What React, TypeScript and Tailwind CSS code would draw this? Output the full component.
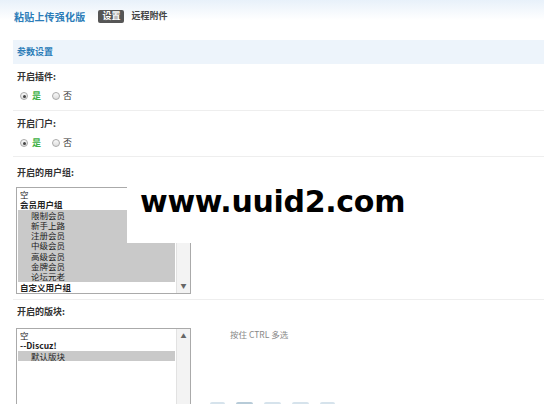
import React from 'react'

const groups: { label: string; bold?: boolean; indent?: boolean; selected?: boolean }[] = [
  { label: '空' },
  { label: '会员用户组', bold: true },
  { label: '限制会员', indent: true, selected: true },
  { label: '新手上路', indent: true, selected: true },
  { label: '注册会员', indent: true, selected: true },
  { label: '中级会员', indent: true, selected: true },
  { label: '高级会员', indent: true, selected: true },
  { label: '金牌会员', indent: true, selected: true },
  { label: '论坛元老', indent: true, selected: true },
  { label: '自定义用户组', bold: true }
]

const forums: typeof groups = [
  { label: '空' },
  { label: '--Discuz!', bold: true },
  { label: '默认版块', indent: true, selected: true }
]

function Radio({ checked }: { checked?: boolean }) {
  return (
    <span className="w-[8px] h-[8px] rounded-full border border-[#aaa] bg-gradient-to-b from-[#fafafa] to-[#ddd] flex items-center justify-center">
      {checked && <span className="w-[3px] h-[3px] rounded-full bg-[#444]" />}
    </span>
  )
}

function YesNo() {
  return (
    <div className="flex items-center h-[12px] pl-[7px] text-[9px]">
      <Radio checked />
      <span className="ml-[4px] text-[#3cb043] font-bold">是</span>
      <span className="ml-[11px]">
        <Radio />
      </span>
      <span className="ml-[3px] text-[#333]">否</span>
    </div>
  )
}

function ListBox({ items, arrow, rows }: { items: typeof groups; arrow: 'up' | 'down'; rows: number }) {
  return (
    <div className="w-[175px] border border-[#aaa] bg-white flex">
      <div className="flex-1 p-[1px]" style={{ height: rows * 10.3 + 2 }}>
        {items.map((it) => (
          <div
            key={it.label}
            className={`h-[10.3px] leading-[10.3px] text-[8.5px] text-[#222] overflow-hidden ${
              it.indent ? 'pl-[13px]' : 'pl-[2px]'
            } ${it.bold ? 'font-bold' : ''} ${it.selected ? 'bg-[#c9c9c9]' : ''}`}
          >
            {it.label}
          </div>
        ))}
      </div>
      <div
        className={`w-[14px] bg-[#f3f3f3] border-l border-[#e2e2e2] flex ${
          arrow === 'down' ? 'items-end' : 'items-start'
        } justify-center text-[6px] text-[#666] leading-none py-[4px]`}
      >
        {arrow === 'down' ? '▼' : '▲'}
      </div>
    </div>
  )
}

export default function App() {
  return (
    <div className="relative w-[544px] h-[404px] overflow-hidden bg-white font-['Noto_Sans_CJK_SC',sans-serif]">
      {/* header */}
      <div className="h-[40px] bg-gradient-to-b from-[#e8f1fa] via-white to-white">
        <div className="h-[32px] flex items-center pl-[14px]">
          <span className="text-[10px] font-bold text-[#2b7cb8] tracking-[0.2px]">粘贴上传强化版</span>
          <span className="ml-[13px] h-[13px] px-[4px] rounded-[2px] bg-[#565656] text-white text-[9px] font-bold flex items-center">
            设置
          </span>
          <span className="ml-[7px] text-[9px] text-[#444] font-bold">远程附件</span>
        </div>
      </div>

      <div className="ml-[13px]">
        {/* section bar */}
        <div className="h-[24px] bg-[#edf4fb] flex items-center pl-[4px] text-[9px] font-bold text-[#2b7cb8]">
          参数设置
        </div>

        <div className="pt-[7px] pb-[8px] border-b border-[#eeeeee]">
          <div className="pl-[4px] h-[12px] leading-[12px] text-[9px] font-bold text-[#333]">开启插件:</div>
          <div className="mt-[7px]">
            <YesNo />
          </div>
        </div>

        <div className="pt-[7px] pb-[7px] border-b border-[#eeeeee]">
          <div className="pl-[4px] h-[12px] leading-[12px] text-[9px] font-bold text-[#333]">开启门户:</div>
          <div className="mt-[7px]">
            <YesNo />
          </div>
        </div>

        <div className="pt-[10px] pb-[5px] border-b border-[#eeeeee]">
          <div className="pl-[4px] h-[12px] leading-[12px] text-[9px] font-bold text-[#333]">开启的用户组:</div>
          <div className="mt-[8px] pl-[3px]">
            <ListBox items={groups} arrow="down" rows={10} />
          </div>
        </div>

        <div className="pt-[6px]">
          <div className="pl-[4px] h-[12px] leading-[12px] text-[9px] font-bold text-[#333]">开启的版块:</div>
          <div className="mt-[10px] pl-[3px] flex">
            <ListBox items={forums} arrow="up" rows={8} />
            <div className="ml-[19px] flex flex-col">
              <div className="pl-[20px] text-[8.5px] text-[#888] leading-[12px]">按住 CTRL 多选</div>
              <div className="mt-[62px] flex gap-[11px]">
                <span className="w-[15px] h-[6px] rounded-t-[2px] bg-[#d6e3ec]" />
                <span className="w-[17px] h-[6px] rounded-t-[2px] bg-[#b7cbd8]" />
                <span className="w-[17px] h-[6px] rounded-t-[2px] bg-[#d6e3ec]" />
                <span className="w-[17px] h-[6px] rounded-t-[2px] bg-[#d6e3ec]" />
                <span className="w-[15px] h-[6px] rounded-t-[2px] bg-[#d6e3ec]" />
              </div>
            </div>
          </div>
        </div>
      </div>

      {/* watermark overlay */}
      <div className="absolute left-[127px] top-[178px] w-[290px] h-[65px] bg-white pl-[13px] pt-[4px]">
        <span className="font-['DejaVu_Sans',sans-serif] font-bold text-[30px] leading-[40px] text-black tracking-[-0.3px]">
          www.uuid2.com
        </span>
      </div>
    </div>
  )
}
